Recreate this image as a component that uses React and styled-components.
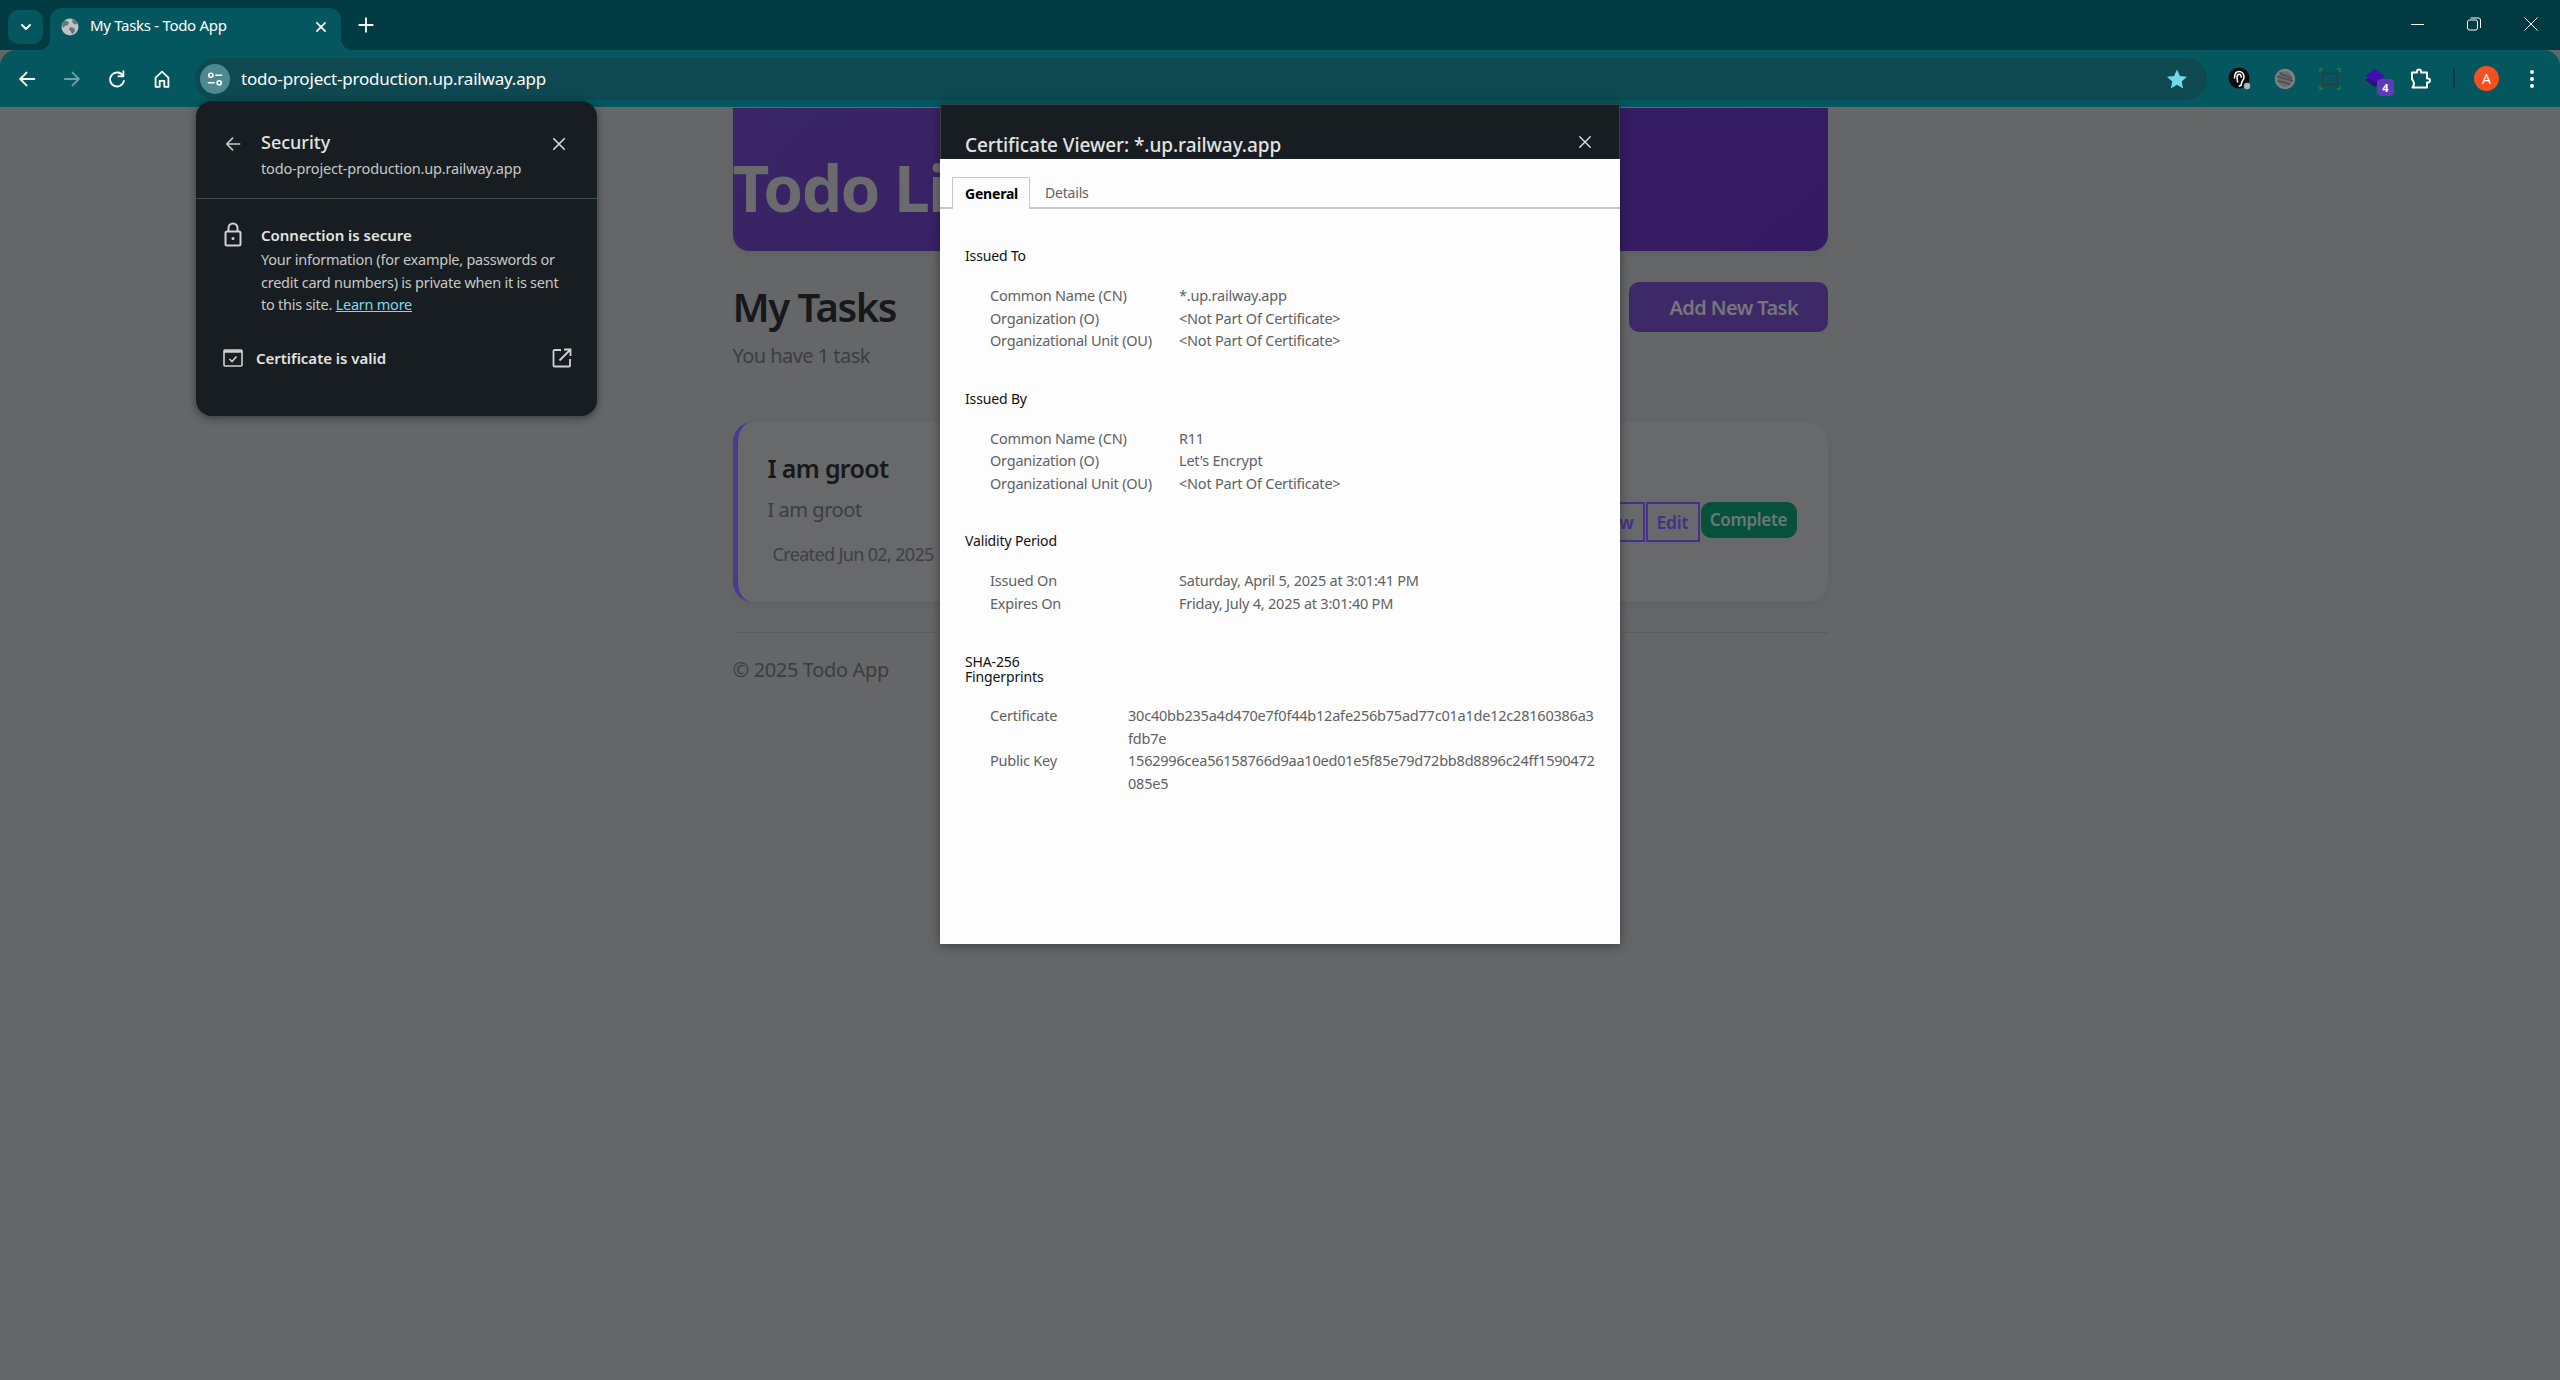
import styled, { createGlobalStyle } from 'styled-components'

const GlobalStyle = createGlobalStyle`
  html, body { margin: 0; padding: 0; background: #656667; }
  * { box-sizing: border-box; }
  body { font-family: "Noto Sans", "Open Sans", sans-serif; }
`

const Win = styled.div`
  position: relative;
  width: 2560px;
  height: 1380px;
  overflow: hidden;
  display: flex;
  flex-direction: column;
  background: #656667;
`

/* browser chrome */
const TabStrip = styled.div`
  height: 50px;
  flex: none;
  display: flex;
  align-items: flex-start;
  padding: 8px 0 0 8px;
  background: #003b43;
`
const TabSearch = styled.div`
  width: 35px;
  height: 34px;
  border-radius: 10px;
  background: #04575f;
  display: flex;
  align-items: center;
  justify-content: center;
  margin: 2px 7px 0 0;
`
const Tab = styled.div`
  position: relative;
  width: 291px;
  height: 42px;
  background: #04575f;
  border-radius: 12px 12px 0 0;
  display: flex;
  align-items: center;
  padding: 0 13px 5px 11px;
  color: #fff;
  &::before, &::after {
    content: "";
    position: absolute;
    bottom: 0;
    width: 12px;
    height: 12px;
  }
  &::before { left: -12px; background: radial-gradient(circle at 0 0, transparent 12px, #04575f 12.5px); }
  &::after { right: -12px; background: radial-gradient(circle at 100% 0, transparent 12px, #04575f 12.5px); }
`
const TabTitle = styled.span`
  flex: 1;
  font-size: 15px;
  line-height: 20px;
  letter-spacing: -0.3px;
  margin: 0 0 3px 11px;
  white-space: nowrap;
`
const NewTab = styled.div`
  margin: 6px 0 0 14px;
  width: 22px;
  height: 22px;
  display: flex;
  align-items: center;
  justify-content: center;
`
const WindowControls = styled.div`
  margin-left: auto;
  display: flex;
  align-items: center;
  padding: 8px 21px 0 0;
  gap: 41px;
`
const Toolbar = styled.div`
  position: relative;
  height: 58px;
  flex: none;
  display: flex;
  align-items: center;
  padding-left: 15px;
  background: #04575f;
  border-radius: 16px 16px 0 0;
  border-bottom: 1px solid #2f8087;
`
const NavButton = styled.div`
  width: 24px;
  height: 24px;
  margin-right: 21px;
  display: flex;
  align-items: center;
  justify-content: center;
`
const Omnibox = styled.div`
  width: 2012px;
  height: 42px;
  border-radius: 21px;
  background: #0e4850;
  display: flex;
  align-items: center;
  padding: 0 19px 0 5px;
`
const SiteChip = styled.div`
  width: 30px;
  height: 30px;
  border-radius: 50%;
  background: #4c8a90;
  display: flex;
  align-items: center;
  justify-content: center;
`
const Url = styled.span`
  flex: 1;
  margin-left: 11px;
  color: #fff;
  font-size: 17px;
  line-height: 22px;
  letter-spacing: -0.2px;
`
const ExtArea = styled.div`
  display: flex;
  align-items: center;
  margin-left: 10px;
`
const ExtButton = styled.div`
  position: relative;
  width: 45px;
  height: 30px;
  display: flex;
  align-items: center;
  justify-content: center;
`
const ExtBadge = styled.span`
  position: absolute;
  right: 3px;
  bottom: -2px;
  width: 17px;
  height: 17px;
  border-radius: 4px;
  background: #5e3bb5;
  color: #fff;
  font-size: 11px;
  line-height: 17px;
  font-weight: 700;
  text-align: center;
`
const Separator = styled.div`
  width: 2px;
  height: 20px;
  background: #0d3b42;
  margin: 0 19px 0 11px;
`
const Avatar = styled.div`
  width: 25px;
  height: 25px;
  border-radius: 50%;
  background: #f4511e;
  color: #fff;
  font-size: 14px;
  line-height: 25px;
  text-align: center;
`
const MenuDots = styled.div`
  margin-left: 23px;
  width: 20px;
  display: flex;
  justify-content: center;
`

/* dimmed page */
const Page = styled.main`
  flex: 1;
  width: 1095px;
  margin: 0 auto;
`
const Hero = styled.header`
  height: 143px;
  border-radius: 0 0 16px 16px;
  background: linear-gradient(135deg, #3a2566 0%, #341a62 100%);
  box-shadow: 0 4px 10px rgba(0, 0, 0, 0.06);
  padding-top: 44px;
`
const HeroTitle = styled.h1`
  margin: 0;
  font-size: 64px;
  line-height: 72px;
  font-weight: 700;
  color: #6b6b6e;
  letter-spacing: -1.6px;
  white-space: nowrap;
`
const TitleRow = styled.div`
  display: flex;
  justify-content: space-between;
  align-items: flex-start;
  margin-top: 31px;
`
const PageTitle = styled.h2`
  margin: 0;
  font-size: 40px;
  line-height: 50px;
  font-weight: 600;
  color: #17181b;
  letter-spacing: -1.5px;
`
const PageSub = styled.p`
  margin: 10px 0 0;
  font-size: 20px;
  line-height: 28px;
  color: #3c3d41;
  letter-spacing: -0.55px;
`
const AddButton = styled.div`
  width: 199px;
  height: 50px;
  border-radius: 10px;
  background: #3d2968;
  color: #76767c;
  font-size: 20px;
  font-weight: 600;
  line-height: 51px;
  padding-left: 41px;
  letter-spacing: -0.6px;
`
const TaskCard = styled.section`
  display: flex;
  justify-content: space-between;
  height: 180px;
  margin-top: 52px;
  padding: 28px 31px 0 30px;
  border-left: 5px solid #4b3a90;
  border-radius: 20px;
  background: #68696a;
  box-shadow: 0 3px 8px rgba(0, 0, 0, 0.05);
`
const TaskTitle = styled.h3`
  margin: 0;
  font-size: 25px;
  line-height: 36px;
  font-weight: 600;
  color: #17181b;
  letter-spacing: -0.7px;
`
const TaskText = styled.p`
  margin: 10px 0 0;
  font-size: 20px;
  line-height: 28px;
  color: #3c3d41;
  letter-spacing: -0.45px;
`
const TaskMeta = styled.p`
  margin: 17px 0 0 5px;
  font-size: 18px;
  line-height: 26px;
  color: #3f4043;
  letter-spacing: -0.65px;
`
const TaskActions = styled.div`
  display: flex;
  align-items: flex-start;
  margin-top: 52px;
`
const OutlineButton = styled.div`
  height: 40px;
  padding: 0 9px;
  border: 2px solid #46308a;
  color: #46308a;
  font-size: 17.5px;
  font-weight: 600;
  line-height: 37px;
  margin-right: 1px;
  letter-spacing: -0.2px;
`
const CompleteButton = styled.div`
  width: 96px;
  height: 36px;
  border-radius: 10px;
  background: #07513a;
  color: #68787a;
  font-size: 17px;
  font-weight: 600;
  line-height: 36px;
  text-align: center;
  letter-spacing: -0.3px;
`
const Footer = styled.footer`
  margin-top: 30px;
  padding-top: 23px;
  border-top: 1px solid #5b5c5f;
  font-size: 20px;
  line-height: 28px;
  color: #3c3d41;
  letter-spacing: -0.35px;
`

/* site security bubble */
const Bubble = styled.aside`
  position: absolute;
  left: 196px;
  top: 101px;
  width: 401px;
  height: 315px;
  border-radius: 16px;
  background: #171d20;
  box-shadow: 0 2px 8px rgba(0, 0, 0, 0.45);
  color: #e3e3e3;
`
const BubbleHead = styled.div`
  height: 98px;
  display: grid;
  grid-template-columns: 38px 1fr 24px;
  padding: 28px 23px 0 27px;
  border-bottom: 1px solid #414c4e;
`
const BubbleIcon = styled.div`
  height: 26px;
  margin-top: 2px;
  display: flex;
  align-items: center;
`
const BubbleTitle = styled.div`
  font-size: 18px;
  line-height: 26px;
  font-weight: 500;
  letter-spacing: 0;
`
const BubbleUrl = styled.div`
  margin-top: 3px;
  font-size: 14.5px;
  line-height: 20px;
  color: #c6c8c8;
  letter-spacing: -0.17px;
`
const BubbleBody = styled.div`
  display: grid;
  grid-template-columns: 37px 1fr;
  padding: 23px 20px 0 28px;
`
const BubbleStrong = styled.div`
  margin-top: 3px;
  font-size: 15px;
  line-height: 20px;
  font-weight: 600;
  letter-spacing: -0.02px;
`
const BubbleText = styled.p`
  margin: 3px 0 0;
  font-size: 14.5px;
  line-height: 22.5px;
  color: #c6c8c8;
  letter-spacing: -0.25px;
  a { color: #7fd8ea; text-decoration: underline; }
`
const CertRow = styled.div`
  display: flex;
  align-items: center;
  margin-top: 30px;
  padding: 0 25px 0 27px;
  height: 24px;
`
const CertLabel = styled.span`
  flex: 1;
  margin-left: 13px;
  font-size: 15px;
  font-weight: 600;
  letter-spacing: -0.02px;
`

/* certificate dialog */
const Dialog = styled.div`
  position: absolute;
  left: 940px;
  top: 104px;
  width: 680px;
  height: 840px;
  display: flex;
  flex-direction: column;
  background: #fdfdfd;
  box-shadow: 0 2px 10px rgba(0, 0, 0, 0.4);
`
const DialogHead = styled.div`
  height: 55px;
  flex: none;
  display: flex;
  align-items: flex-end;
  justify-content: space-between;
  padding: 0 25px 0 24px;
  background: #171d20;
  border: 1px solid #3a4042;
  border-bottom: 0;
`
const DialogTitle = styled.span`
  font-size: 19px;
  line-height: 28px;
  font-weight: 500;
  color: #e3e3e3;
  letter-spacing: -0.07px;
`
const DialogClose = styled.div`
  height: 24px;
  margin-bottom: 5px;
  display: flex;
  align-items: center;
`
const TabRow = styled.div`
  display: flex;
  height: 50px;
  flex: none;
  padding: 18px 0 0 12px;
  border-bottom: 2px solid #c9c9c9;
`
const DialogTab = styled.div`
  width: ${(p) => (p.$active ? '78px' : '70px')};
  height: ${(p) => (p.$active ? '32px' : '30px')};
  padding-left: ${(p) => (p.$active ? '12px' : '15px')};
  background: ${(p) => (p.$active ? '#fdfdfd' : 'transparent')};
  border: ${(p) => (p.$active ? '1px solid #c9c9c9' : '0')};
  border-bottom: 0;
  font-size: 14px;
  line-height: 32px;
  font-weight: ${(p) => (p.$active ? 700 : 400)};
  color: ${(p) => (p.$active ? '#000' : '#5f6261')};
  letter-spacing: -0.2px;
`
const Sections = styled.div`
  padding: 36px 25px 0;
`
const Section = styled.section`
  margin-bottom: ${(p) => (p.$last ? 0 : '36px')};
  padding-top: ${(p) => (p.$last ? '4px' : 0)};
`
const SectionHeading = styled.h4`
  margin: 0 0 ${(p) => (p.$compact ? '20px' : '17px')};
  width: 100px;
  font-size: 14px;
  line-height: ${(p) => (p.$compact ? '15px' : '22px')};
  font-weight: 400;
  color: #111;
  letter-spacing: -0.15px;
`
const Field = styled.div`
  display: grid;
  grid-template-columns: ${(p) => p.$keyWidth}px 1fr;
  padding-left: 25px;
  font-size: 14.5px;
  line-height: 22.5px;
  color: #5f6261;
  letter-spacing: -0.22px;
  white-space: nowrap;
`

const Svg = ({ size = 20, box = 24, sw = 2, color = '#fff', children }) => (
  <svg width={size} height={size} viewBox={`0 0 ${box} ${box}`} fill="none" stroke={color} strokeWidth={sw} strokeLinecap="round" strokeLinejoin="round">
    {children}
  </svg>
)

const ArrowLeft = (p) => <Svg {...p}><path d="M20 12H4.5M11.5 5l-7 7 7 7" /></Svg>
const ArrowRight = (p) => <Svg {...p}><path d="M4 12h15.5M12.5 5l7 7-7 7" /></Svg>
const Close = (p) => <Svg {...p}><path d="M5 5l14 14M19 5L5 19" /></Svg>

const fields = {
  to: [['Common Name (CN)', '*.up.railway.app'], ['Organization (O)', '<Not Part Of Certificate>'], ['Organizational Unit (OU)', '<Not Part Of Certificate>']],
  by: [['Common Name (CN)', 'R11'], ['Organization (O)', "Let's Encrypt"], ['Organizational Unit (OU)', '<Not Part Of Certificate>']],
  valid: [['Issued On', 'Saturday, April 5, 2025 at 3:01:41 PM'], ['Expires On', 'Friday, July 4, 2025 at 3:01:40 PM']],
}

const FieldList = ({ rows }) => rows.map(([k, v]) => (
  <Field key={k} $keyWidth={189}><span>{k}</span><span>{v}</span></Field>
))

function ChromeBar() {
  return (
    <>
      <TabStrip>
        <TabSearch><Svg size={16} sw={3}><path d="M6 9l6 6 6-6" /></Svg></TabSearch>
        <Tab>
          <svg width="18" height="18" viewBox="0 0 18 18">
            <circle cx="9" cy="9" r="8.5" fill="#bcc4c6" />
            <path d="M5 2.5l3 2-1 2.5-3 1-2 2-1-3 2-4zM9 9l4 1 1 3-3 3.5-1-3-2-2zM11 1l4 2 1.5 3-3 .5-2-2z" fill="#64767a" />
          </svg>
          <TabTitle>My Tasks - Todo App</TabTitle>
          <Svg size={14} sw={3}><path d="M5 5l14 14M19 5L5 19" /></Svg>
        </Tab>
        <NewTab><Svg size={18} sw={2.4}><path d="M12 3v18M3 12h18" /></Svg></NewTab>
        <WindowControls>
          <svg width="16" height="16" viewBox="0 0 16 16" stroke="#fff" strokeWidth="1" fill="none"><path d="M2 8.5h13" /></svg>
          <svg width="16" height="16" viewBox="0 0 16 16" stroke="#fff" strokeWidth="1" fill="none">
            <rect x="1.5" y="4" width="10" height="10" rx="2" />
            <path d="M4.5 2h8a2 2 0 0 1 2 2v8" />
          </svg>
          <svg width="16" height="16" viewBox="0 0 16 16" stroke="#fff" strokeWidth="1" fill="none"><path d="M1.5 1.5l13 13M14.5 1.5l-13 13" /></svg>
        </WindowControls>
      </TabStrip>
      <Toolbar>
        <NavButton><ArrowLeft size={22} /></NavButton>
        <NavButton><ArrowRight size={22} color="#6da2a6" /></NavButton>
        <NavButton>
          <Svg size={22}><path d="M18.5 8.5A7.6 7.6 0 1 0 19.5 14" /><path d="M19 3.5v5.5h-5.5" /></Svg>
        </NavButton>
        <NavButton>
          <Svg size={22}><path d="M5 20.5V10.5L12 4l7 6.5v10h-4.5V14h-5v6.5z" /></Svg>
        </NavButton>
        <Omnibox>
          <SiteChip>
            <Svg size={20} sw={1.9}>
              <circle cx="7" cy="7.5" r="2.5" /><path d="M13 7.5h7M4 16.5h7" /><circle cx="17" cy="16.5" r="2.5" />
            </Svg>
          </SiteChip>
          <Url>todo-project-production.up.railway.app</Url>
          <svg width="22" height="22" viewBox="0 0 24 24" fill="#6fd8ea"><path d="M12 1.5l3.2 7.2 7.8.8-5.9 5.2 1.7 7.7L12 18.4l-6.8 4 1.7-7.7L1 9.5l7.8-.8z" /></svg>
        </Omnibox>
        <ExtArea>
          <ExtButton>
            <svg width="24" height="24" viewBox="0 0 24 24">
              <circle cx="11" cy="11" r="10.5" fill="#0c0c0c" />
              <path d="M6.500 11c0-4.500 2-6.500 4.700-6.500S16 7 16 10c0 3.500-2.500 3.500-2.500 6.500 0 1.500-1 2.500-2.300 2.500M9.500 15c0-2-.5-3-.5-4.500 0-2 1-3.300 2.300-3.300s2 1.300 1.800 3" fill="none" stroke="#fff" strokeWidth="1.500" strokeLinecap="round" />
              <circle cx="19" cy="19" r="3.200" fill="#b4b4b4" />
            </svg>
          </ExtButton>
          <ExtButton>
            <svg width="22" height="22" viewBox="0 0 22 22" fill="none">
              <circle cx="11" cy="11" r="9" fill="#6b6b6b" stroke="#7f8486" strokeWidth="2.400" />
              <path d="M3 8.500c3 .5 11 3 16 4.500M3.500 13c4 0 10 2.500 13 3.500M6 4c.5 2.500 4 3.500 7 4s3.500 1.500 4 3" stroke="#484f52" strokeWidth="1.600" />
            </svg>
          </ExtButton>
          <ExtButton>
            <svg width="22" height="22" viewBox="0 0 22 22" fill="none">
              <rect x="3.500" y="5.500" width="15" height="11" stroke="#33393b" strokeWidth="1.600" />
              <path d="M1 4V1h3M18 1h3v3M21 18v3h-3M4 21H1v-3" stroke="#2f7a32" strokeWidth="1.400" />
            </svg>
          </ExtButton>
          <ExtButton>
            <svg width="22" height="22" viewBox="0 0 22 22">
              <path d="M1 12l10-6 10 6-10 7z" fill="#2b1279" />
              <path d="M1 8l10-7 10 7-10 6z" fill="#3f0fb0" />
            </svg>
            <ExtBadge>4</ExtBadge>
          </ExtButton>
          <ExtButton>
            <Svg size={22} box={22}><path d="M3 4.500h5V3.500a2 2 0 0 1 4 0v1h6v6h1a2 2 0 0 1 0 4h-1v5H3.500c1-1.500 1.500-3 1.500-4s-1-3-2-4.500z" /></Svg>
          </ExtButton>
          <Separator />
          <Avatar>A</Avatar>
          <MenuDots>
            <svg width="6" height="20" viewBox="0 0 6 20" fill="#fff"><circle cx="3" cy="3" r="2" /><circle cx="3" cy="10" r="2" /><circle cx="3" cy="17" r="2" /></svg>
          </MenuDots>
        </ExtArea>
      </Toolbar>
    </>
  )
}

function TodoPage() {
  return (
    <Page>
      <Hero><HeroTitle>Todo List</HeroTitle></Hero>
      <TitleRow>
        <div>
          <PageTitle>My Tasks</PageTitle>
          <PageSub>You have 1 task</PageSub>
        </div>
        <AddButton>Add New Task</AddButton>
      </TitleRow>
      <TaskCard>
        <div>
          <TaskTitle>I am groot</TaskTitle>
          <TaskText>I am groot</TaskText>
          <TaskMeta>Created Jun 02, 2025</TaskMeta>
        </div>
        <TaskActions>
          <OutlineButton>View</OutlineButton>
          <OutlineButton>Edit</OutlineButton>
          <CompleteButton>Complete</CompleteButton>
        </TaskActions>
      </TaskCard>
      <Footer>© 2025 Todo App</Footer>
    </Page>
  )
}

function SecurityBubble() {
  return (
    <Bubble>
      <BubbleHead>
        <BubbleIcon><ArrowLeft size={20} color="#c6c8c8" sw={2} /></BubbleIcon>
        <div>
          <BubbleTitle>Security</BubbleTitle>
          <BubbleUrl>todo-project-production.up.railway.app</BubbleUrl>
        </div>
        <BubbleIcon><Close size={18} color="#d6d8d8" sw={2.200} /></BubbleIcon>
      </BubbleHead>
      <BubbleBody>
        <svg width="18" height="26" viewBox="0 0 18 26" fill="none" stroke="#d0d2d2" strokeWidth="2">
          <rect x="1.500" y="9.500" width="15" height="14" rx="1.500" />
          <path d="M4.500 9.500V6a4.500 4.500 0 0 1 9 0v3.500" />
          <circle cx="9" cy="16.500" r="1.500" fill="#d0d2d2" stroke="none" />
        </svg>
        <div>
          <BubbleStrong>Connection is secure</BubbleStrong>
          <BubbleText>
            Your information (for example, passwords or<br />
            credit card numbers) is private when it is sent<br />
            to this site. <a href="#learn">Learn more</a>
          </BubbleText>
        </div>
      </BubbleBody>
      <CertRow>
        <svg width="20" height="18" viewBox="0 0 20 18" fill="none" stroke="#d0d2d2" strokeWidth="1.600">
          <rect x="1" y="1" width="18" height="16" rx="1" />
          <path d="M1 2.500h18" strokeWidth="2.500" />
          <path d="M6.500 10l2.500 2.500 4.500-5" />
        </svg>
        <CertLabel>Certificate is valid</CertLabel>
        <svg width="20" height="20" viewBox="0 0 20 20" fill="none" stroke="#d0d2d2" strokeWidth="1.800">
          <path d="M9 2H2.500a1 1 0 0 0-1 1v14.500a1 1 0 0 0 1 1H17a1 1 0 0 0 1-1V11" />
          <path d="M7.500 12.500L18 2M12 1.500h6.500V8" />
        </svg>
      </CertRow>
    </Bubble>
  )
}

function CertificateDialog() {
  return (
    <Dialog>
      <DialogHead>
        <DialogTitle>Certificate Viewer: *.up.railway.app</DialogTitle>
        <DialogClose><Close size={18} color="#e3e3e3" sw={1.800} /></DialogClose>
      </DialogHead>
      <TabRow>
        <DialogTab $active>General</DialogTab>
        <DialogTab>Details</DialogTab>
      </TabRow>
      <Sections>
        <Section>
          <SectionHeading>Issued To</SectionHeading>
          <FieldList rows={fields.to} />
        </Section>
        <Section>
          <SectionHeading>Issued By</SectionHeading>
          <FieldList rows={fields.by} />
        </Section>
        <Section>
          <SectionHeading>Validity Period</SectionHeading>
          <FieldList rows={fields.valid} />
        </Section>
        <Section $last>
          <SectionHeading $compact>SHA-256 Fingerprints</SectionHeading>
          <Field $keyWidth={138}>
            <span>Certificate</span>
            <span>30c40bb235a4d470e7f0f44b12afe256b75ad77c01a1de12c28160386a3<br />fdb7e</span>
          </Field>
          <Field $keyWidth={138}>
            <span>Public Key</span>
            <span>1562996cea56158766d9aa10ed01e5f85e79d72bb8d8896c24ff1590472<br />085e5</span>
          </Field>
        </Section>
      </Sections>
    </Dialog>
  )
}

export default function App() {
  return (
    <>
      <GlobalStyle />
      <Win>
        <ChromeBar />
        <TodoPage />
        <SecurityBubble />
        <CertificateDialog />
      </Win>
    </>
  )
}
